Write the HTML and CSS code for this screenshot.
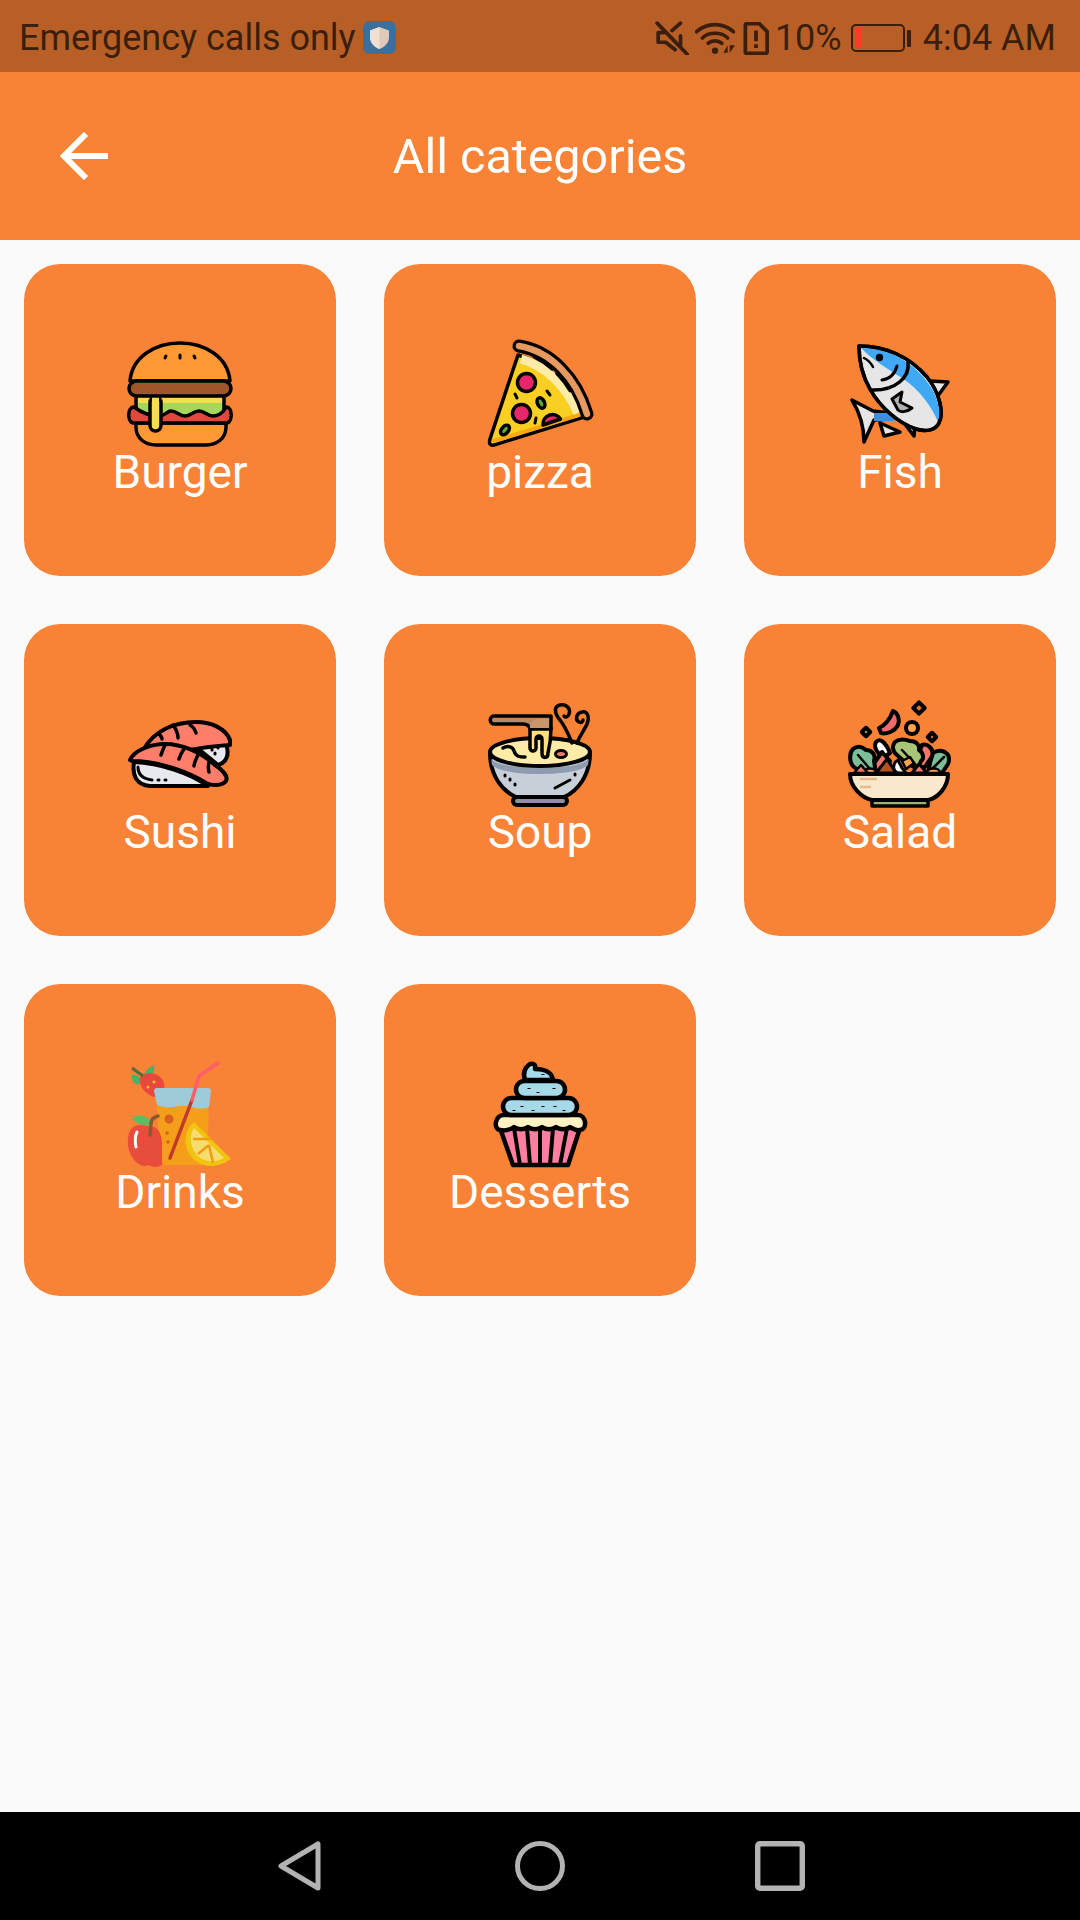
FILE: index.html
```html
<!DOCTYPE html>
<html lang="en">
<head>
<meta charset="utf-8">
<title>All categories</title>
<link rel="stylesheet" href="styles.css">
</head>
<body>
<div class="screen">
  <header class="status">
    <div class="status-left">
      <span>Emergency calls only</span>
      <svg class="ic-shield" viewBox="0 0 33 33"><rect width="33" height="33" rx="7" fill="#3A709F"/><path d="M16.500 6 L26 9.500 V16 C26 22 21.500 26 16.500 28 C11.500 26 7 22 7 16 V9.500Z" fill="#DFC9B8"/><path d="M16.500 6 V28 C11.500 26 7 22 7 16 V9.500Z" fill="#F0E0D4"/></svg>
    </div>
    <div class="status-right">
      <svg class="ic-mute" viewBox="0 0 32 32" fill="none" stroke="#3B1F0C" stroke-width="3.500" stroke-linejoin="round" stroke-linecap="round"><path d="M2 2 L31 32"/><path d="M24 2 L16 9 M24 14 V24 M19 27 L10 20 H3 V11 H8"/></svg>
      <svg class="ic-wifi" viewBox="0 0 38 32" fill="none" stroke="#3B1F0C" stroke-width="3.500" stroke-linecap="round"><path d="M1.500 10 C11 1 27 1 36.500 10"/><path d="M7 16 C13 10 25 10 31 16"/><path d="M12.500 21 C16 18 22 18 25.500 21"/><circle cx="19" cy="28" r="3" fill="#3B1F0C" stroke="none"/><path d="M27 30 L31 23 V30Z M33 23 L38 23 L33 30Z" fill="#3B1F0C" stroke="none"/></svg>
      <svg class="ic-sim" viewBox="0 0 24 31" fill="none" stroke="#3B1F0C" stroke-width="3.500" stroke-linejoin="round"><path d="M2 3 Q2 1.500 3.500 1.500 H15 L22.500 9 V28 Q22.500 29.500 21 29.500 H3.500 Q2 29.500 2 28Z"/><path d="M12 8 V18 M12 21 V24.500"/></svg>
      <span class="pct">10%</span>
      <div class="battery"><div class="battery-fill"></div></div>
      <div class="battery-nub"></div>
      <span class="clock">4:04 AM</span>
    </div>
  </header>

  <div class="appbar">
    <svg class="ic-back" viewBox="0 0 48 48" fill="none" stroke="#fff" stroke-width="6"><path d="M48 24 H4"/><path d="M26 2 L4 24 L26 46"/></svg>
    <h1 class="title">All categories</h1>
  </div>

  <main class="grid">
    <article class="card">
      <svg class="food" viewBox="0 0 120 120" stroke="#000" stroke-width="3.500" stroke-linejoin="round" stroke-linecap="round">
        <path d="M16 88 H106 V92 C106 104 96 110 86 110 H36 C26 110 16 104 16 92Z" fill="#FF9933"/>
        <path d="M16 60 H104 V84 H16Z" fill="#A6D65A"/>
        <path d="M18 63 H102 V68 H18Z" fill="#F8DC50" stroke="none"/>
        <path d="M14 72 C7 72 7 88 14 88 H106 C113 88 113 72 106 72 C103 78 99 81 93 81 C87 81 85 76 79 76 C73 76 71 81 65 81 C59 81 57 76 51 76 C47 76 45 81 39 81 C30 81 22 78 14 72Z" fill="#E0483E"/>
        <rect x="30" y="62" width="11" height="34" rx="5.500" fill="#F8DC50"/>
        <path d="M32 60 H39 V70 H32Z" fill="#F8DC50" stroke="none"/>
        <path d="M10 46 C12 22 35 8 60 8 C85 8 108 22 110 46Z" fill="#FF9933"/>
        <rect x="9" y="46" width="102" height="15" rx="7.500" fill="#A0552A"/>
        <path d="M46 21 L45 23 M60 20 V23 M74 21 L75 23" stroke-width="3"/>
      </svg>
      <span class="label">Burger</span>
    </article>

    <article class="card">
      <svg class="food" viewBox="0 0 120 120" stroke="#000" stroke-width="3.500" stroke-linejoin="round" stroke-linecap="round">
        <path d="M10 104 L38 20 C66 28 90 52 104 82 L14 110 Q8 111 10 104Z" fill="#F9CF22"/>
        <path d="M14 106 L99 80" stroke="#F9A80E" stroke-width="4" fill="none"/>
        <path d="M41 24 C66 31 86 51 98 78" stroke="#FFEBA8" stroke-width="9" fill="none" stroke-linecap="butt"/>
        <path d="M54 22 C70 30 82 42 90 56" stroke-width="3" fill="none" stroke-dasharray="22 6"/>
        <path d="M39 11 C70 16 96 42 107 79" stroke-width="13" fill="none"/>
        <path d="M39 11 C70 16 96 42 107 79" stroke="#E8995F" stroke-width="6.500" fill="none"/>
        <circle cx="46.500" cy="47.500" r="9" fill="#E8266A"/>
        <circle cx="41.500" cy="78.500" r="9" fill="#E8266A"/>
        <path d="M63 90 A9.500 9.500 0 0 1 80.500 84Z" fill="#E8266A"/>
        <ellipse cx="61" cy="68" rx="3.500" ry="5.500" transform="rotate(-25 61 68)" fill="#5FA83C"/>
        <ellipse cx="25" cy="95" rx="3.500" ry="5.500" transform="rotate(40 25 95)" fill="#5FA83C"/>
        <path d="M67 56 L70 60 M35 59 L37 63 M56 83 L55 88" stroke-width="3"/>
      </svg>
      <span class="label">pizza</span>
    </article>

    <article class="card">
      <svg class="food" viewBox="0 0 120 120" stroke="#000" stroke-width="3.500" stroke-linejoin="round" stroke-linecap="round">
        <path d="M90 46 L108 47 L97 62Z" fill="#E6E6E6"/>
        <path d="M12 65 L33 76 L50 78 L50 84 L34 85 L24 107 C24 92 20 78 12 65Z" fill="#E6E6E6"/>
        <path d="M34 78 L54 78 L54 86 L34 86Z" fill="#3B8FDE" stroke="none"/>
        <path d="M40 88 L60 97 L44 101Z" fill="#E6E6E6"/>
        <path d="M64 88 L75 90 L74 101Z" fill="#E6E6E6"/>
        <path d="M19 11 C46 11 70 22 87 42 C100 58 104 78 99 88 C95 96 85 97 76 94 C58 88 40 72 30 54 C23 42 19 26 19 11Z" fill="#E6E6E6"/>
        <path d="M21 13 C46 13 69 24 85 44 C97 58 102 76 98 87 C92 72 80 55 62 43 C48 34 34 26 21 13Z" fill="#3FA9F5" stroke="none"/>
        <path d="M19 11 C46 11 70 22 87 42 C100 58 104 78 99 88 C95 96 85 97 76 94 C58 88 40 72 30 54 C23 42 19 26 19 11Z" fill="none"/>
        <circle cx="39.500" cy="22.500" r="3.700" fill="#000" stroke="none"/>
        <path d="M68 27 C70 42 56 56 31 55" fill="none"/>
        <path d="M42 45 C50 44 55 38 57 31" fill="none" stroke-width="3"/>
        <path d="M24 23 C28 25 31 28 33 32" fill="none" stroke-width="2.500"/>
        <path d="M52 64 L62 57 L60 67 L72 73 C66 78 60 77 58 75Z" fill="#B3B3B3" stroke-width="3"/>
      </svg>
      <span class="label">Fish</span>
    </article>

    <article class="card">
      <svg class="food" viewBox="0 0 120 120" stroke="#000" stroke-width="4" stroke-linejoin="round" stroke-linecap="round">
        <path d="M76 52 L106 49 C110 60 106 68 98 70 Z" fill="#E6E9EE"/>
        <path d="M92 54 V55 M98 52 V53 M95 58 V59" stroke-width="3"/>
        <path d="M24 54 C34 36 54 27 76 27 C92 27 106 34 110 45 L110 50 C95 51 80 53 70 55 C55 50 40 50 24 54Z" fill="#FF7E6B"/>
        <path d="M53 30 C56 34 58 38 58 43 M70 30 C74 32 75 35 76 38 M39 39 C41 41 42 42 42 44" fill="none" stroke-width="3.500"/>
        <path d="M14 67 C12 80 16 90 30 91 H88 C70 78 40 68 14 67Z" fill="#E6E9EE"/>
        <path d="M10 65 C14 56 28 50 42 49 C62 48 82 58 95 70 C104 76 108 82 106 86 C102 91 92 91 86 88 C70 78 40 66 12 66Z" fill="#FF7E6B"/>
        <path d="M45 50 C43 54 42 57 41 60 M64 54 C61 58 60 61 59 64 M78 60 C76 64 74 68 74 71 M89 67 C88 72 88 74 89 77" fill="none" stroke-width="3.500"/>
        <path d="M18 72 C18 80 24 84 32 85 M38 85 H39 M45 85 H46" fill="none" stroke-width="3"/>
      </svg>
      <span class="label">Sushi</span>
    </article>

    <article class="card">
      <svg class="food" viewBox="0 0 120 120" stroke="#000" stroke-width="4" stroke-linejoin="round" stroke-linecap="round">
        <rect x="33" y="102" width="54" height="8" rx="4" fill="#8B93A3"/>
        <path d="M10 58 C10 80 22 96 36 102 H84 C98 96 110 80 110 58Z" fill="#C9CFD9"/>
        <path d="M11 64 C22 76 98 76 109 64 L108 70 C98 82 22 82 12 70Z" fill="#8F9BAF" stroke="none"/>
        <ellipse cx="60" cy="57" rx="50" ry="14" fill="#FFEBA8"/>
        <path d="M50 33 V53 C50 57 56 57 56 53 V44 C56 40 62 40 62 44 V58 C62 64 68 64 68 58 C70 50 71 42 71 33Z" fill="#FFDF7E" stroke-width="3.500"/>
        <path d="M14 21 H71 V34 H50 C49 30 46 29 43 29 H14 C9 29 9 21 14 21Z" fill="#B98A66" stroke-width="3.500"/>
        <path d="M50 33 C49 30 52 26 56 24 H69 V33Z" fill="#C9956B" stroke="none"/>
        <path d="M92 48 C88 38 84 30 80 25 C74 18 74 11 80 10 C87 9 91 14 89 19 C88 22 85 23 84 21" fill="none" stroke-width="3.500"/>
        <path d="M97 48 C100 40 105 34 107 29 C110 21 107 16 102 17 C96 18 95 25 99 27 C101 28 103 27 103 25" fill="none" stroke-width="3.500"/>
        <path d="M23 53 C28 50 33 52 34 56 C36 62 40 62 45 62" fill="none" stroke-width="3.500"/>
        <ellipse cx="81" cy="59" rx="5.500" ry="3.500" fill="#F2796B" stroke-width="3"/>
        <path d="M25 80 V81 M30 84 V85 M35 89 V90 M95 79 V80" stroke-width="3"/>
        <path d="M75 93 L90 85" fill="none" stroke-width="3"/>
      </svg>
      <span class="label">Soup</span>
    </article>

    <article class="card">
      <svg class="food" viewBox="0 0 120 120" stroke="#000" stroke-width="4" stroke-linejoin="round" stroke-linecap="round">
        <path d="M39 33 C46 30 50 24 53 16 C58 18 60 24 58 30 C55 36 46 40 41 38Z" fill="#F06A6A"/>
        <circle cx="72" cy="33" r="6" fill="#FFA34D"/>
        <rect x="75" y="9" width="8" height="8" transform="rotate(45 79 13)" fill="#E8762B"/>
        <rect x="23" y="34" width="6" height="6" transform="rotate(45 26 37)" fill="#9CB26F"/>
        <rect x="89" y="39" width="6" height="6" transform="rotate(45 92 42)" fill="#E8762B"/>
        <path d="M82 50 C88 48 93 54 93 60 L85 72 H74Z" fill="#F2766C"/>
        <path d="M36 47 C40 42 46 48 50 58 L44 62 C38 60 33 52 36 47Z" fill="#fff"/>
        <path d="M30 74 L42 57 L50 66 L44 78Z" fill="#F2766C"/>
        <path d="M13 54 C18 50 23 52 26 55 C32 55 36 60 34 66 L36 78 H22 L14 72 C9 68 9 58 13 54Z" fill="#7BBE97"/>
        <path d="M93 58 C97 55 103 55 106 58 C110 60 110 68 106 72 L102 78 H88 L90 68Z" fill="#7BBE97"/>
        <path d="M55 47 C60 43 67 45 70 46 C76 46 80 50 79 55 C84 58 84 64 81 66 L78 74 L66 68 L57 60 C52 56 52 50 55 47Z" fill="#A9C578"/>
        <path d="M62 55 L76 70 M18 60 L30 74 M104 62 L92 74" fill="none" stroke-width="2.500"/>
        <path d="M36 78 L47 64 L56 78Z" fill="#B5501F" stroke-width="3"/>
        <path d="M58 65 C52 68 52 78 60 78 H66 C62 74 60 70 58 65Z" fill="#fff" stroke-width="3"/>
        <path d="M62 66 L70 62 L74 68 L66 74Z" fill="#FFA34D" stroke-width="2.500"/>
        <path d="M72 78 L79 69 L87 78Z" fill="#F2766C" stroke-width="3"/>
        <path d="M24 78 C24 72 36 72 36 78Z" fill="#FFA34D" stroke-width="2.500"/>
        <path d="M87 78 C87 72 100 72 100 78Z" fill="#FFA34D" stroke-width="2.500"/>
        <path d="M14 78 L21 70 L28 78Z" fill="#F2766C" stroke-width="2.500"/>
        <rect x="32" y="104" width="56" height="7" fill="#9CB26F" stroke-width="3.500"/>
        <path d="M10 79 H108 C108 92 98 103 88 105 H32 C22 103 10 92 10 79Z" fill="#F9E8CC"/>
        <path d="M20 84 H37 M20 92 H31" stroke="#E8B98F" stroke-width="2.500" fill="none" stroke-linecap="butt"/>
      </svg>
      <span class="label">Salad</span>
    </article>

    <article class="card">
      <svg class="food" viewBox="0 0 120 120">
        <path d="M17 30 C13 28 11 24 12 20 C16 19 21 22 22 27Z" fill="#4CAF6A"/>
        <path d="M24 20 C25 15 30 12 34 10 C35 15 33 20 28 22Z" fill="#4CAF6A"/>
        <path d="M20 23 C24 16 40 16 44 28 C46 36 40 42 34 42 C26 40 18 30 20 23Z" fill="#E9483E"/>
        <circle cx="28" cy="32" r="1.500" fill="#F5C518"/>
        <circle cx="34" cy="27" r="1.500" fill="#F5C518"/>
        <path d="M12 13 L23 21" stroke="#5A6B3A" stroke-width="3" fill="none"/>
        <path d="M37 50 C50 56 60 48 72 52 C78 54 84 52 88 50 C90 70 86 95 83 110 H43 C40 90 38 70 37 50Z" fill="#F59E1A"/>
        <path d="M34 36 Q34 33 37 33 H88 Q91 33 91 36 L89 52 C84 54 78 54 72 52 C60 48 50 56 37 50Z" fill="#9DCCD8"/>
        <circle cx="49" cy="64" r="4.500" fill="#D9611F"/>
        <circle cx="47" cy="78" r="1.800" fill="#D9611F"/>
        <circle cx="48" cy="87" r="1.800" fill="#D9611F"/>
        <path d="M50 103 L72 45" stroke="#C0392B" stroke-width="3.500" stroke-linecap="round" fill="none"/>
        <path d="M72 45 L79 21 L98 8" stroke="#FF5C6C" stroke-width="3.500" stroke-linecap="round" stroke-linejoin="round" fill="none"/>
        <path d="M15 71 C22 68 28 72 33 72 C38 72 42 80 42 88 V110 C36 113 32 112 28 110 C22 113 16 108 12 102 C7 94 5 76 15 71Z" fill="#E74C3C"/>
        <path d="M17 77 C15 81 15 87 16 92" stroke="#fff" stroke-width="3" stroke-linecap="round" fill="none"/>
        <path d="M12 63 C18 59 28 60 33 69 C25 72 16 70 12 63Z" fill="#5DBB63"/>
        <path d="M30 80 L31 69 C31 64 34 62 38 61" stroke="#8B5A2B" stroke-width="3.500" stroke-linecap="round" fill="none"/>
        <path d="M74 67 L111 104 C95 116 75 112 68 96 C63 84 66 74 74 67Z" fill="#F1C40F"/>
        <path d="M74 73 L104 103 C92 110 78 106 73 94 C70 86 70 79 74 73Z" fill="#F7DC6F"/>
        <path d="M73 84 L92 84 M78 99 L89 90 M93 108 L89 90" stroke="#F39C12" stroke-width="2.500" fill="none"/>
      </svg>
      <span class="label">Drinks</span>
    </article>

    <article class="card">
      <svg class="food" viewBox="0 0 120 120" stroke="#000" stroke-width="4.500" stroke-linejoin="round" stroke-linecap="round">
        <path d="M20 73 L33 110 H88 L100 73Z" fill="#FF7FA0"/>
        <path d="M34 73 L40 110 M47 73 L50 110 M60 73 V110 M73 73 L70 110 M87 73 L80 110" fill="none" stroke-width="4"/>
        <path d="M24 60 H98 C106 60 108 74 100 75 C95 76 93 74 90 72 C86 75 80 75 76 72 C72 75 66 75 62 72 C58 75 52 75 48 72 C44 75 38 75 34 72 C30 75 24 76 20 75 C13 74 15 60 24 60Z" fill="#FFF3C4"/>
        <rect x="23" y="43" width="74" height="17" rx="8.500" fill="#A6DAE8"/>
        <rect x="36" y="26" width="49" height="17" rx="8.500" fill="#A6DAE8"/>
        <path d="M45 25 C43 19 44 13 50 9 C54 8 56 10 55 14 C62 14 72 16 73 25Z" fill="#A6DAE8"/>
        <path d="M63 19 V20 M49 33 V34 M58 37 V38 M74 33 V34 M34 55 V56 M42 51 V52 M53 55 V56 M63 51 V52 M75 51 V52 M84 55 V56" stroke-width="3" stroke-linecap="butt"/>
      </svg>
      <span class="label">Desserts</span>
    </article>
  </main>

  <nav class="navbar">
    <svg class="nav-ic" viewBox="0 0 44 50" fill="none" stroke="#B3B3B3" stroke-width="5" stroke-linejoin="round"><path d="M40 3 V47 L3 25Z"/></svg>
    <svg class="nav-ic" viewBox="0 0 50 50" fill="none" stroke="#B3B3B3" stroke-width="5"><circle cx="25" cy="25" r="22.500"/></svg>
    <svg class="nav-ic" viewBox="0 0 46 46" fill="none" stroke="#B3B3B3" stroke-width="5" stroke-linejoin="round"><rect x="2.500" y="2.500" width="41" height="41" rx="2"/></svg>
  </nav>
</div>
</body>
</html>
```
FILE: styles.css
```css
* { box-sizing: border-box; }
html, body { margin: 0; padding: 0; }
body { font-family: Roboto, "Noto Sans", sans-serif; background: #FAFAFA; }
.screen { width: 1080px; height: 1920px; display: flex; flex-direction: column; overflow: hidden; }

.status { height: 72px; background: #B85F27; color: #3B1F0C; display: flex; justify-content: space-between; align-items: center; padding: 4px 24px 0 19px; font-size: 36px; line-height: 68px; }
.status-left { display: flex; align-items: center; gap: 7px; }
.status-right { display: flex; align-items: center; }
.ic-shield { width: 33px; height: 33px; display: block; margin-top: -2px; }
.ic-mute { width: 34px; height: 34px; margin-right: 6px; }
.ic-wifi { width: 40px; height: 34px; margin-right: 8px; }
.ic-sim { width: 26px; height: 33px; margin-right: 6px; }
.pct { margin-right: 9px; }
.battery { width: 54px; height: 28px; border: 2px solid #3B1F0C; border-radius: 5px; padding: 2px 0 2px 2px; }
.battery-fill { width: 6px; height: 100%; background: #FF3B25; }
.battery-nub { width: 4px; height: 17px; background: #3B1F0C; margin: 0 12px 0 2px; border-radius: 1px; }

.appbar { height: 168px; background: #F88235; display: flex; align-items: center; justify-content: center; position: relative; color: #fff; }
.ic-back { position: absolute; left: 60px; top: 60px; width: 48px; height: 48px; }
.title { margin: 0; font-size: 48.500px; font-weight: 400; }

.grid { flex: 1; display: grid; grid-template-columns: repeat(3, 312px); grid-auto-rows: 312px; gap: 48px; padding: 24px; align-content: start; }
.card { background: #F88235; border-radius: 36px; display: flex; flex-direction: column; align-items: center; padding-top: 71px; color: #fff; }
.food { width: 120px; height: 120px; display: block; flex: none; }
.label { font-size: 46px; font-weight: 400; line-height: 48px; margin-top: -7px; }

.navbar { height: 108px; background: #000; display: flex; align-items: center; justify-content: center; }
.nav-ic { display: block; height: 50px; width: 50px; margin: 0 95px; }
```
